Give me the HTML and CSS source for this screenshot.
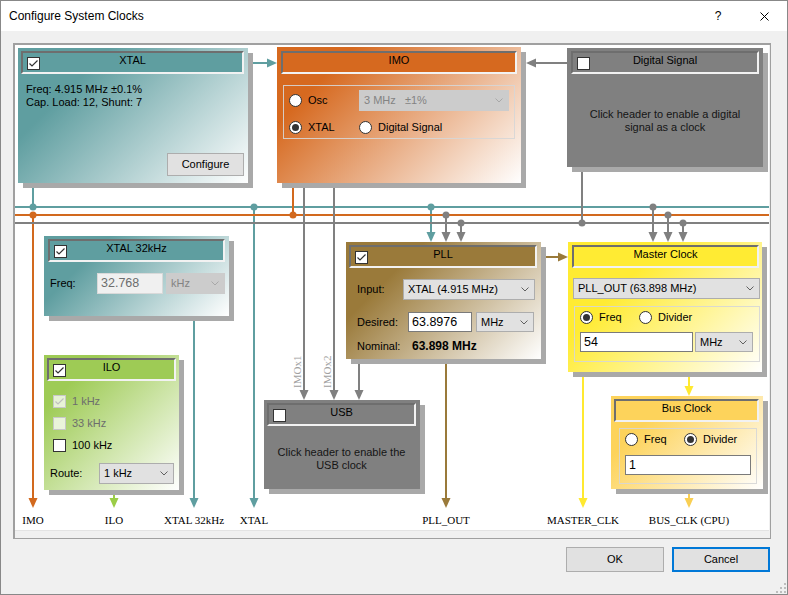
FILE: index.html
```html
<!DOCTYPE html>
<html>
<head>
<meta charset="utf-8">
<title>Configure System Clocks</title>
<link rel="stylesheet" href="styles.css">
</head>
<body>
<div class="win">
  <div class="titlebar">
    <span class="title">Configure System Clocks</span>
    <span class="help">?</span>
    <span class="close"><svg width="9" height="9" viewBox="0 0 9 9"><path d="M0.5 0.5L8.5 8.5M8.5 0.5L0.5 8.5" stroke="#000" stroke-width="1" fill="none"/></svg></span>
  </div>

  <div class="frame">
    <div class="canvas">
      <svg class="wires" viewBox="15 45 754 486" width="754" height="486">
        <g fill="none" stroke-width="2">
          <path stroke="#5f9ea0" d="M15 207H769M33 150V207M254 207V499M431 207V233M194 300V499M250 63H268"/>
          <path stroke="#d2691e" d="M15 215H769M33 215V499M293 150V215"/>
          <path stroke="#808080" d="M15 223H769M304 150V391M334 150V391M446 215V233M461 223V233M582 150V223M653 207V233M668 215V233M683 223V233M359 340V391M567 63H535"/>
          <path stroke="#9a7a3a" d="M530 257H559M446 340V499"/>
          <path stroke="#ffe930" d="M583 350V499M689 360V387"/>
          <path stroke="#f9cf53" d="M689 470V499"/>
          <path stroke="#9bcd47" d="M114 470V499"/>
        </g>
        <g fill="#5f9ea0">
          <circle cx="33" cy="207" r="3.5"/><circle cx="254" cy="207" r="3.5"/><circle cx="431" cy="207" r="3.5"/>
          <polygon points="28.5,498 37.5,498 33,508" fill="#d2691e"/>
          <polygon points="189.5,498 198.5,498 194,508"/>
          <polygon points="249.5,498 258.5,498 254,508"/>
          <polygon points="426.5,232 435.5,232 431,242"/>
          <polygon points="267,58.5 267,67.5 277,63"/>
        </g>
        <g fill="#d2691e">
          <circle cx="33" cy="215" r="3.5"/><circle cx="293" cy="215" r="3.5"/>
        </g>
        <g fill="#808080">
          <circle cx="446" cy="215" r="3.5"/><circle cx="461" cy="223" r="3.5"/><circle cx="582" cy="223" r="3.5"/>
          <circle cx="653" cy="207" r="3.5"/><circle cx="668" cy="215" r="3.5"/><circle cx="683" cy="223" r="3.5"/>
          <polygon points="441.5,232 450.5,232 446,242"/>
          <polygon points="456.5,232 465.5,232 461,242"/>
          <polygon points="648.5,232 657.5,232 653,242"/>
          <polygon points="663.5,232 672.5,232 668,242"/>
          <polygon points="678.5,232 687.5,232 683,242"/>
          <polygon points="299.5,390 308.5,390 304,400"/>
          <polygon points="329.5,390 338.5,390 334,400"/>
          <polygon points="354.5,390 363.5,390 359,400"/>
          <polygon points="536,58.5 536,67.5 526,63"/>
        </g>
        <polygon fill="#9a7a3a" points="558,252.5 558,261.5 568,257"/>
        <polygon fill="#9a7a3a" points="441.5,498 450.5,498 446,508"/>
        <polygon fill="#ffe930" points="578.5,498 587.5,498 583,508"/>
        <polygon fill="#ffe930" points="684.5,386 693.5,386 689,396"/>
        <polygon fill="#f9cf53" points="684.5,498 693.5,498 689,508"/>
        <polygon fill="#9bcd47" points="109.5,498 118.5,498 114,508"/>
        <text class="vlab" transform="translate(301 388) rotate(-90)">IMOx1</text>
        <text class="vlab" transform="translate(331 388) rotate(-90)">IMOx2</text>
        <g class="lab">
          <text x="33" y="524">IMO</text>
          <text x="114" y="524">ILO</text>
          <text x="194" y="524">XTAL 32kHz</text>
          <text x="254" y="524">XTAL</text>
          <text x="446" y="524">PLL_OUT</text>
          <text x="583" y="524">MASTER_CLK</text>
          <text x="689" y="524">BUS_CLK (CPU)</text>
        </g>
      </svg>

      <div class="block b-xtal">
        <div class="hdr"><span class="cb"><svg viewBox="0 0 11 11"><path d="M1.5 5.5L4 8L9.5 2.5"/></svg></span><span class="ttl">XTAL</span></div>
        <div class="xtal-info">
          <div>Freq: 4.915 MHz ±0.1%</div>
          <div>Cap. Load: 12, Shunt: 7</div>
        </div>
        <button class="btn cfg">Configure</button>
      </div>

      <div class="block b-imo">
        <div class="hdr"><span class="ttl">IMO</span></div>
        <div class="grp imo-grp">
          <span class="opt"><span class="rb"></span>Osc</span>
          <span class="dd dis"><span>3 MHz&nbsp;&nbsp;&nbsp;±1%</span><svg class="chev" viewBox="0 0 8 5"><path d="M0.5 0.5L4 4L7.5 0.5"/></svg></span>
          <span class="opt"><span class="rb on"></span>XTAL</span>
          <span class="opt"><span class="rb"></span>Digital Signal</span>
        </div>
      </div>

      <div class="block b-dig gray">
        <div class="hdr"><span class="cb"></span><span class="ttl">Digital Signal</span></div>
        <div class="msg">Click header to enable a digital<br>signal as a clock</div>
      </div>

      <div class="block b-x32">
        <div class="hdr"><span class="cb"><svg viewBox="0 0 11 11"><path d="M1.5 5.5L4 8L9.5 2.5"/></svg></span><span class="ttl">XTAL 32kHz</span></div>
        <div class="row x32-row">
          <span class="lbl">Freq:</span>
          <span class="tb dis">32.768</span>
          <span class="dd dis"><span>kHz</span><svg class="chev" viewBox="0 0 8 5"><path d="M0.5 0.5L4 4L7.5 0.5"/></svg></span>
        </div>
      </div>

      <div class="block b-ilo">
        <div class="hdr"><span class="cb"><svg viewBox="0 0 11 11"><path d="M1.5 5.5L4 8L9.5 2.5"/></svg></span><span class="ttl">ILO</span></div>
        <div class="ilo-opts">
          <span class="opt dis"><span class="cb dis"><svg viewBox="0 0 11 11"><path d="M1.5 5.5L4 8L9.5 2.5"/></svg></span>1 kHz</span>
          <span class="opt dis"><span class="cb dis"></span>33 kHz</span>
          <span class="opt"><span class="cb"></span>100 kHz</span>
        </div>
        <div class="row ilo-route">
          <span class="lbl">Route:</span>
          <span class="dd"><span>1 kHz</span><svg class="chev" viewBox="0 0 8 5"><path d="M0.5 0.5L4 4L7.5 0.5"/></svg></span>
        </div>
      </div>

      <div class="block b-pll">
        <div class="hdr"><span class="cb"><svg viewBox="0 0 11 11"><path d="M1.5 5.5L4 8L9.5 2.5"/></svg></span><span class="ttl">PLL</span></div>
        <div class="row pll-in">
          <span class="lbl">Input:</span>
          <span class="dd"><span>XTAL (4.915 MHz)</span><svg class="chev" viewBox="0 0 8 5"><path d="M0.5 0.5L4 4L7.5 0.5"/></svg></span>
        </div>
        <div class="row pll-des">
          <span class="lbl">Desired:</span>
          <span class="tb">63.8976</span>
          <span class="dd"><span>MHz</span><svg class="chev" viewBox="0 0 8 5"><path d="M0.5 0.5L4 4L7.5 0.5"/></svg></span>
        </div>
        <div class="row pll-nom">
          <span class="lbl">Nominal:</span>
          <span class="nom">63.898 MHz</span>
        </div>
      </div>

      <div class="block b-usb gray">
        <div class="hdr"><span class="cb"></span><span class="ttl">USB</span></div>
        <div class="msg">Click header to enable the<br>USB clock</div>
      </div>

      <div class="block b-mst">
        <div class="hdr"><span class="ttl">Master Clock</span></div>
        <span class="dd m-src"><span>PLL_OUT (63.898 MHz)</span><svg class="chev" viewBox="0 0 8 5"><path d="M0.5 0.5L4 4L7.5 0.5"/></svg></span>
        <div class="grp m-grp">
          <div class="radios">
            <span class="opt"><span class="rb on"></span>Freq</span>
            <span class="opt"><span class="rb"></span>Divider</span>
          </div>
          <div class="row m-val">
            <span class="tb">54</span>
            <span class="dd"><span>MHz</span><svg class="chev" viewBox="0 0 8 5"><path d="M0.5 0.5L4 4L7.5 0.5"/></svg></span>
          </div>
        </div>
      </div>

      <div class="block b-bus">
        <div class="hdr"><span class="ttl">Bus Clock</span></div>
        <div class="grp b-grp">
          <div class="radios">
            <span class="opt"><span class="rb"></span>Freq</span>
            <span class="opt"><span class="rb on"></span>Divider</span>
          </div>
          <div class="row b-val">
            <span class="tb">1</span>
          </div>
        </div>
      </div>
    </div>
  </div>

  <div class="btns">
    <button class="btn dlg">OK</button>
    <button class="btn dlg primary">Cancel</button>
  </div>
  <svg class="grip" width="10" height="10" viewBox="0 0 10 10"><g fill="#bdbdbd"><rect x="8" y="0" width="2" height="2"/><rect x="4" y="4" width="2" height="2"/><rect x="8" y="4" width="2" height="2"/><rect x="0" y="8" width="2" height="2"/><rect x="4" y="8" width="2" height="2"/><rect x="8" y="8" width="2" height="2"/></g></svg>
</div>
</body>
</html>
```

FILE: styles.css
```css
* { box-sizing: border-box; margin: 0; padding: 0; }
html, body { background: #f0f0f0; }
body {
  font-family: "Liberation Sans", Arial, sans-serif;
  font-size: 11px;
  line-height: 13px;
  color: #000;
}

.win {
  position: relative;
  width: 788px;
  height: 595px;
  border: 1px solid #888;
  background: #f0f0f0;
  display: flex;
  flex-direction: column;
}

.titlebar {
  flex: none;
  height: 30px;
  background: #fff;
  display: flex;
  align-items: center;
  padding-left: 8px;
  font-size: 12px;
}
.title { flex: 1; }
.help, .close {
  width: 46px;
  display: flex;
  justify-content: center;
  align-items: center;
}

.frame {
  flex: none;
  margin: 12px 0 0 12px;
  width: 758px;
  height: 496px;
  border-style: solid;
  border-color: #a0a0a0;
  border-width: 2px 1px 1px 2px;
}
.canvas {
  position: relative;
  width: 754px;
  height: 486px;
  background: #fff;
  border-bottom: 1px solid #e3e3e3;
}
.wires { position: absolute; left: 0; top: 0; }
.wires .lab { font-family: "Liberation Serif", "Times New Roman", serif; font-size: 11px; fill: #000; text-anchor: middle; }
.wires .vlab { font-family: "Liberation Serif", "Times New Roman", serif; font-size: 11px; fill: #a0a0a0; }

/* blocks */
.block {
  position: absolute;
  padding: 3px 4px 3px 3px;
  display: flex;
  flex-direction: column;
  box-shadow: 5px 5px 0 #a9a9a9;
}
.hdr {
  flex: none;
  height: 23px;
  border: 2px solid;
  border-color: #6e6e6e #f2f2f2 #f2f2f2 #6e6e6e;
  display: grid;
  grid-template-columns: 1fr auto 1fr;
  padding-top: 1px;
  line-height: 13px;
}
.hdr .cb { align-self: center; justify-self: start; margin-left: 4px; grid-column: 1; grid-row: 1; }
.ttl { grid-column: 2; grid-row: 1; white-space: nowrap; }

.gray { background: #808080; }
.gray .hdr { background: #808080; }
.msg {
  flex: 1;
  display: flex;
  align-items: center;
  justify-content: center;
  text-align: center;
  color: #151515;
  line-height: 13px;
}

.b-xtal { left: 3px; top: 3px; width: 230px; height: 135px; background: linear-gradient(135deg, #5f9ea0 25%, #ffffff 100%); }
.b-xtal .hdr, .b-x32 .hdr { background: #5f9ea0; }
.xtal-info { margin-top: 9px; padding-left: 5px; line-height: 13px; }
.cfg { margin-top: auto; align-self: flex-end; width: 77px; height: 23px; margin-bottom: 4px; }

.b-imo { left: 262px; top: 2px; width: 244px; height: 136px; padding: 4px 4px 3px 4px; background: linear-gradient(135deg, #d6691f 20%, #ffffff 100%); }
.b-imo .hdr { background: #d6691f; }
.imo-grp {
  margin: 11px 2px 0 2px;
  height: 54px;
  padding: 4px 0 0 5px;
  display: grid;
  grid-template-columns: 70px 150px;
  grid-template-rows: 21px 21px;
  row-gap: 6px;
  align-items: center;
}

.b-dig { left: 552px; top: 3px; width: 196px; height: 119px; padding: 3px 4px 3px 4px; }
.b-dig .msg { padding-top: 4px; }

.b-x32 { left: 29px; top: 191px; width: 185px; height: 80px; padding: 3px 4px 3px 4px; background: linear-gradient(135deg, #5f9ea0 25%, #ffffff 100%); }
.x32-row { margin-top: 11px; padding-left: 2px; }
.x32-row .lbl { width: 47px; }
.x32-row .tb { width: 66px; height: 21px; }
.x32-row .dd { width: 59px; margin-left: 3px; }

.b-ilo { left: 29px; top: 310px; width: 135px; height: 135px; padding: 3px; background: linear-gradient(135deg, #9ecb55 20%, #ffffff 100%); }
.b-ilo .hdr { background: #9ecb55; }
.ilo-opts { margin-top: 10px; padding-left: 6px; display: flex; flex-direction: column; gap: 1px; }
.ilo-opts .opt { height: 21px; }
.ilo-route { margin-top: 7px; padding-left: 3px; }
.ilo-route .lbl { width: 49px; }
.ilo-route .dd { width: 75px; }

.b-pll { left: 331px; top: 197px; width: 195px; height: 117px; background: linear-gradient(135deg, #9a7a3a 25%, #ffffff 100%); }
.b-pll .hdr { background: #9a7a3a; }
.pll-in { margin-top: 11px; padding-left: 8px; }
.pll-in .lbl { width: 46px; }
.pll-in .dd { width: 132px; }
.pll-des { margin-top: 12px; padding-left: 8px; }
.pll-des .lbl { width: 51px; }
.pll-des .tb { width: 64px; }
.pll-des .dd { width: 58px; height: 20px; margin-left: 4px; }
.pll-nom { margin-top: 7px; padding-left: 8px; line-height: 14px; }
.pll-nom .lbl { width: 55px; }
.nom { font-weight: bold; font-size: 12px; }

.b-usb { left: 249px; top: 355px; width: 156px; height: 89px; }
.b-usb .msg { padding-top: 5px; }

.b-mst { left: 553px; top: 197px; width: 194px; height: 130px; padding: 3px 3px 3px 4px; background: linear-gradient(135deg, #ffeb33 30%, #ffffff 100%); }
.b-mst .hdr { background: #ffeb33; }
.m-src { margin: 10px 0 0 1px; width: 187px; }
.m-grp { margin: 7px 0 0 2px; width: 186px; height: 56px; padding-left: 5px; }
.radios { display: grid; grid-template-columns: 59px auto; height: 21px; align-items: center; }
.m-val { margin-top: 4px; }
.m-val .tb { width: 113px; }
.m-val .dd { width: 58px; height: 20px; margin-left: 2px; }

.b-bus { left: 596px; top: 351px; width: 152px; height: 93px; background: linear-gradient(135deg, #fdd35b 25%, #ffffff 100%); }
.b-bus .hdr { background: #fdd35b; }
.b-grp { margin: 6px 0 0 5px; width: 138px; height: 56px; padding-left: 5px; }
.b-val { margin-top: 5px; }
.b-val .tb { width: 126px; }

/* controls */
.row { display: flex; align-items: center; }
.lbl { flex: none; white-space: nowrap; }
.grp { border: 1px solid rgba(214, 214, 214, 0.9); }

.cb {
  width: 13px; height: 13px;
  border: 1px solid #333;
  background: #fff;
  display: inline-flex;
  align-items: center;
  justify-content: center;
  flex: none;
}
.cb svg { width: 11px; height: 11px; fill: none; stroke: #333; stroke-width: 1.2; }
.cb.dis { border-color: #c8c8c8; background: rgba(255, 255, 255, 0.75); }
.cb.dis svg { stroke: #bfbfbf; }

.rb {
  width: 13px; height: 13px;
  border: 1px solid #333;
  border-radius: 50%;
  background: #fff;
  display: inline-flex;
  align-items: center;
  justify-content: center;
  flex: none;
}
.rb.on::after { content: ""; width: 7px; height: 7px; border-radius: 50%; background: #333; }

.opt { display: flex; align-items: center; gap: 6px; white-space: nowrap; }
.opt.dis { color: #6d6d6d; }

.dd {
  display: flex;
  align-items: center;
  justify-content: space-between;
  height: 21px;
  padding: 0 5px 0 4px;
  background: #e1e1e1;
  border: 1px solid #adadad;
  white-space: nowrap;
  flex: none;
}
.chev { width: 8px; height: 5px; fill: none; stroke: #606060; stroke-width: 1; flex: none; }
.dd.dis { background: #cccccc; border-color: #cccccc; color: #838383; }
.dd.dis .chev { stroke: #a8a8a8; }

.tb {
  display: flex;
  align-items: center;
  height: 20px;
  padding-left: 3px;
  background: #fff;
  border: 1px solid #7a7a7a;
  font-size: 12.5px;
  flex: none;
}
.tb.dis { background: #f0f0f0; border-color: #d9d9d9; color: #6d6d6d; }

.btn {
  font: inherit;
  color: #000;
  background: #e1e1e1;
  border: 1px solid #adadad;
}

.btns {
  flex: none;
  display: flex;
  justify-content: flex-end;
  gap: 8px;
  margin-top: 8px;
  padding-right: 17px;
}
.dlg { width: 98px; height: 25px; }
.primary { border: 2px solid #0078d7; }

.grip { position: absolute; right: 1px; bottom: 1px; }
```
